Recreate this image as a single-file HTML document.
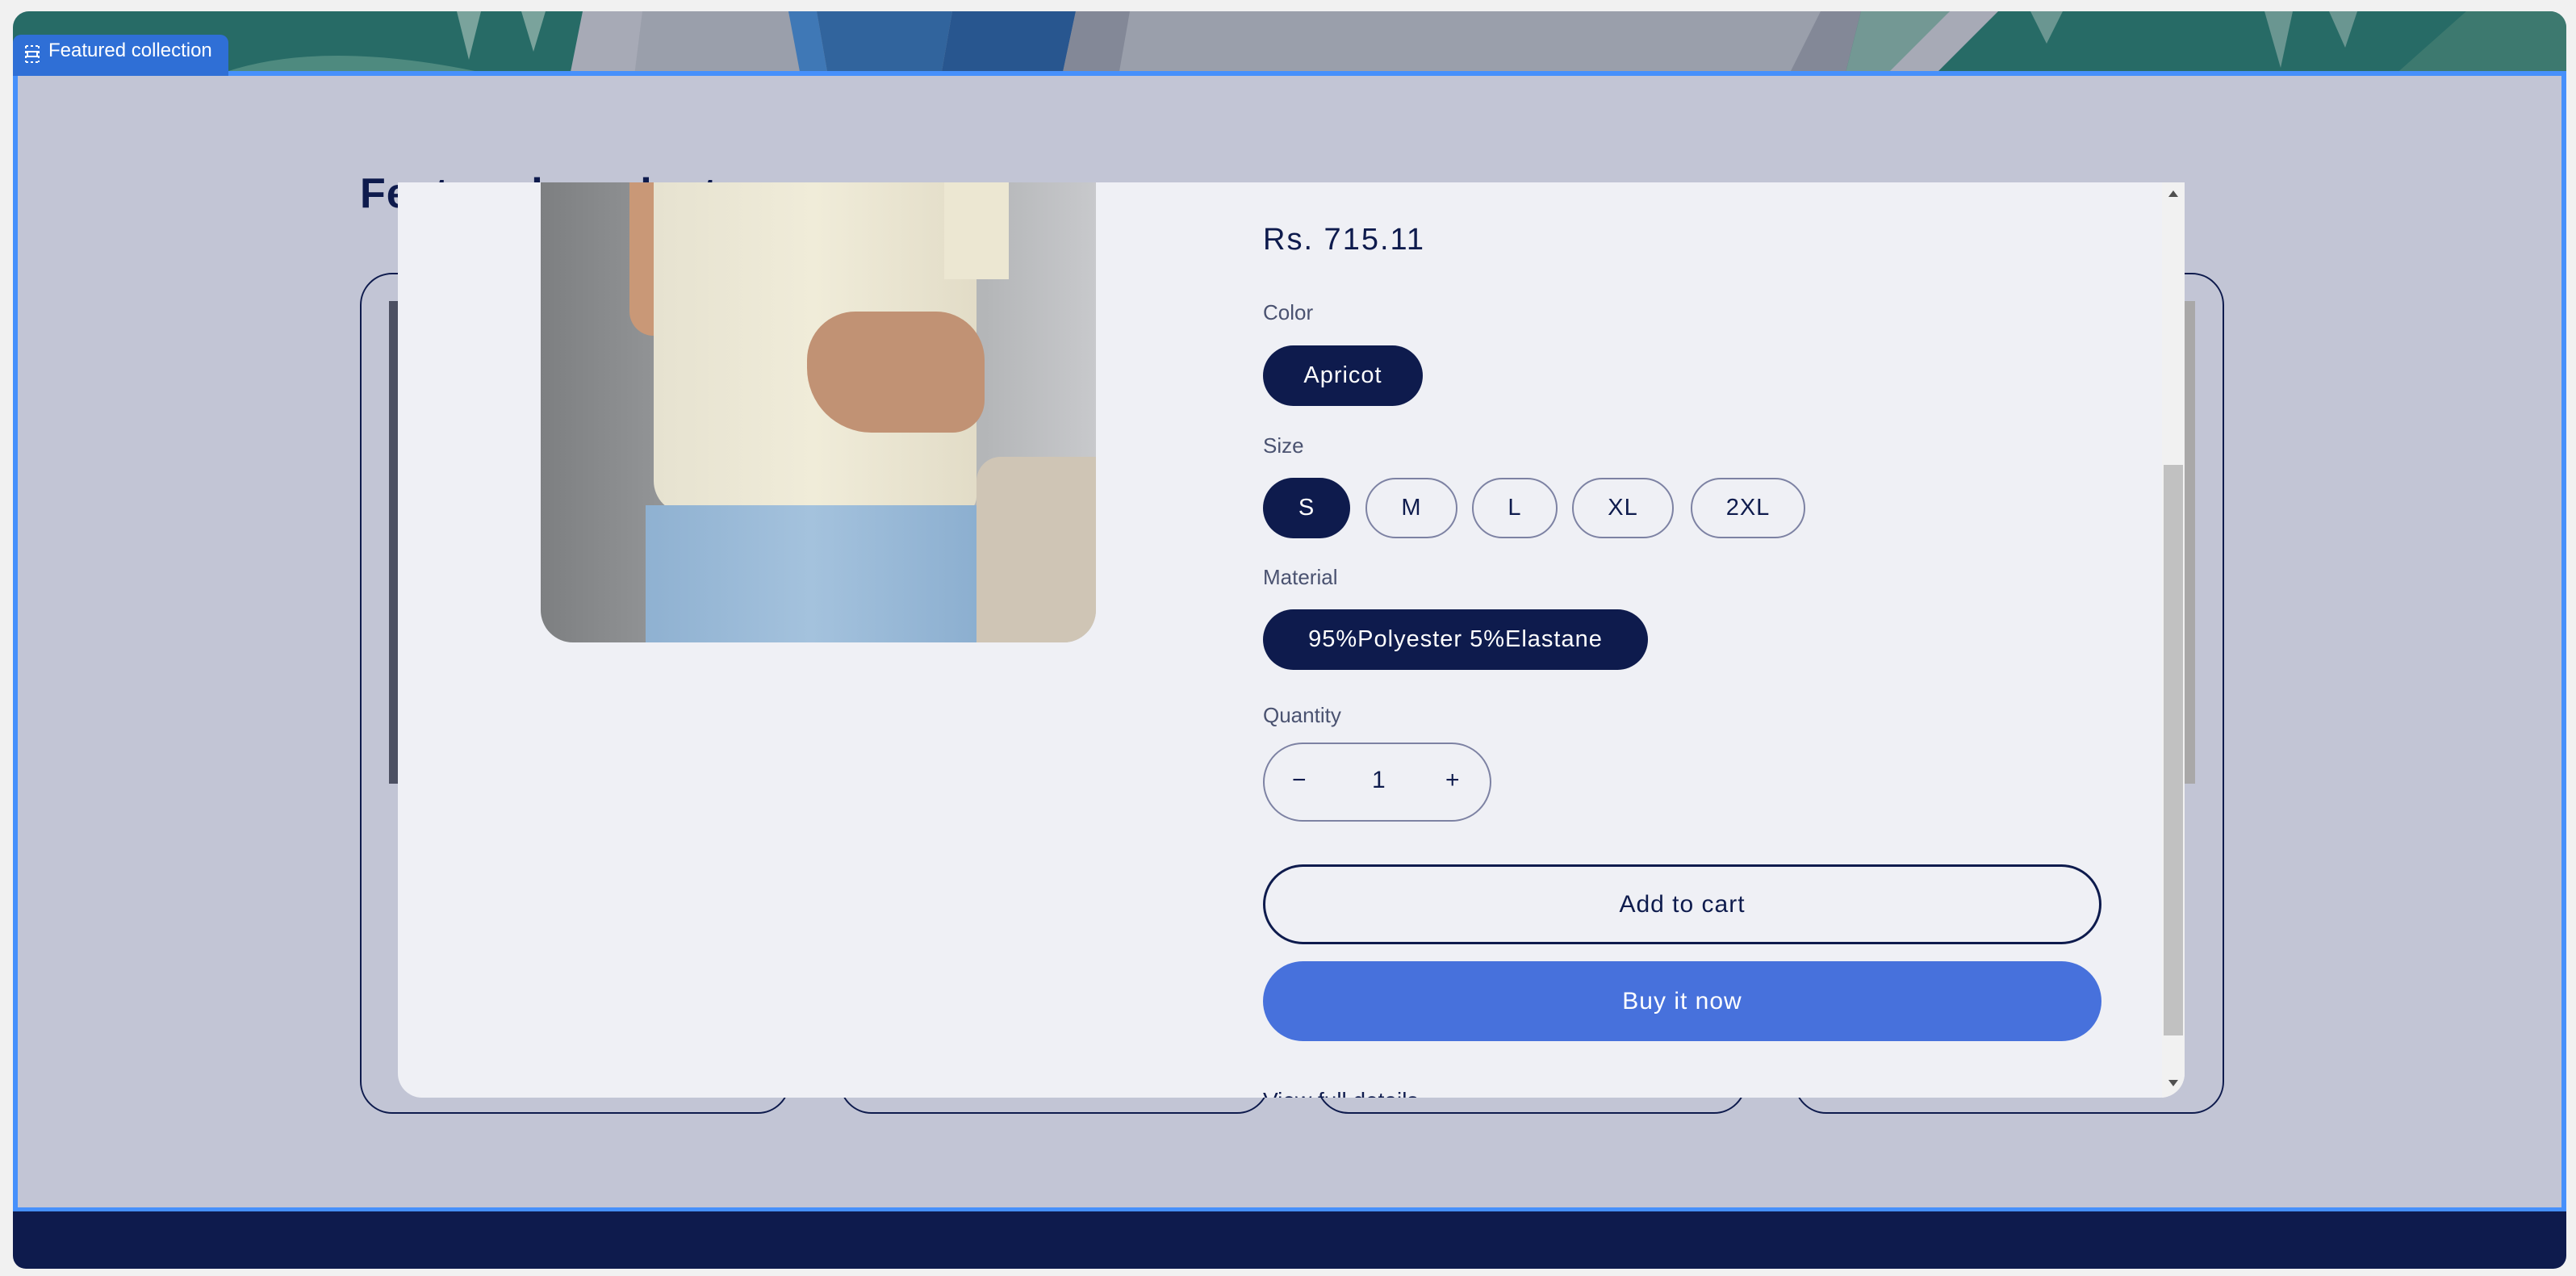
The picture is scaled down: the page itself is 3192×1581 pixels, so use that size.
<!DOCTYPE html>
<html><head><meta charset="utf-8"><style>
*{margin:0;padding:0;box-sizing:border-box}
html,body{width:3192px;height:1581px;overflow:hidden;background:#f1f1f1;font-family:"Liberation Sans",sans-serif}
.abs{position:absolute}
.band{left:16px;top:14px;width:3164px;height:80px;border-radius:20px 20px 0 0;overflow:hidden}
.tag{left:16px;top:43px;width:267px;height:51px;background:#2f6fd6;border-radius:10px 10px 0 0;color:#fff;font-size:24px;line-height:40px;padding-left:44px}
.sec{left:16px;top:88px;width:3164px;height:1414px;background:#c2c5d5;border:6px solid #4690fb}
.foot{left:16px;top:1501px;width:3164px;height:71px;background:#0e1b4d;border-radius:0 0 16px 16px}
h2{position:absolute;left:446px;top:214px;font-size:52px;line-height:52px;color:#0e1b4d;font-weight:bold;letter-spacing:1px}
.card{top:338px;height:1042px;width:533px;border:2px solid #0e1b4d;border-radius:40px}
.modal{left:493px;top:226px;width:2214px;height:1134px;background:#eff0f5;border-radius:0 0 30px 30px;overflow:hidden}
.lbl{position:absolute;left:1072px;font-size:26px;color:#4a5270}
.pill{position:absolute;height:75px;border-radius:40px;font-size:29px;display:flex;align-items:center;justify-content:center;letter-spacing:1px}
.dark{background:#0e1b4d;color:#fff}
.out{border:2px solid #7d82a3;color:#0e1b4d}
</style></head><body>
<div class="abs band">
<svg width="3164" height="80" viewBox="0 0 3164 80" preserveAspectRatio="none">
<rect width="3164" height="80" fill="#9a9fab"/>
<rect width="706" height="80" fill="#276b66"/>
<path d="M250 80 Q380 30 600 80Z" fill="#4e8a7f"/>
<path d="M550 0 L565 60 L580 0Z M630 0 L645 50 L660 0Z" fill="#7aa39c"/>
<polygon points="706,0 780,0 770,80 690,80" fill="#a7aab6"/>
<polygon points="961,0 996,0 1010,80 976,80" fill="#3f78b6"/>
<polygon points="996,0 1164,0 1150,80 1010,80" fill="#31649d"/>
<polygon points="1164,0 1317,0 1300,80 1150,80" fill="#28568f"/>
<polygon points="1317,0 1384,0 1370,80 1300,80" fill="#838897"/>
<polygon points="2240,0 2290,0 2270,80 2200,80" fill="#838897"/>
<polygon points="2290,0 3164,0 3164,80 2270,80" fill="#276b66"/>
<polygon points="2290,0 2400,0 2330,80 2270,80" fill="#739894"/>
<polygon points="2400,0 2460,0 2380,80 2320,80" fill="#a7aab6"/>
<polygon points="3040,0 3164,0 3164,80 2950,80" fill="#3d796f"/>
<path d="M2790 0 L2810 70 L2825 0Z M2870 0 L2890 45 L2905 0Z M2500 0 L2520 40 L2540 0Z" fill="#6a9691"/>
</svg></div>
<div class="abs sec"></div>
<div class="abs tag"><svg class="abs" style="left:14px;top:12px" width="20" height="24" viewBox="0 0 20 24"><path d="M2 2h16M2 22h16M2 2v20M18 2v20" stroke="#fff" stroke-width="2" stroke-dasharray="3 3" fill="none"/><rect x="4" y="9" width="12" height="6" fill="none" stroke="#fff" stroke-width="2"/></svg>Featured collection</div>
<h2>Featured products</h2>
<div class="abs card" style="left:446px"></div>
<div class="abs card" style="left:1040px"></div>
<div class="abs card" style="left:1631px"></div>
<div class="abs card" style="left:2223px"></div>
<div class="abs" style="left:482px;top:373px;width:20px;height:598px;background:#4c5062"></div>
<div class="abs" style="left:2707px;top:373px;width:13px;height:598px;background:#a9a8a8"></div>
<div class="abs foot"></div>
<div class="abs modal">
 <div class="abs" style="left:177px;top:0;width:688px;height:570px;border-radius:0 0 40px 40px;overflow:hidden;background:linear-gradient(90deg,#7d7f81,#a5a7a9 40%,#b4b6b8 80%,#c8c9cc)">
  <div class="abs" style="left:110px;top:0;width:70px;height:190px;background:#c99877;border-radius:0 0 40px 30px"></div>
  <div class="abs" style="left:140px;top:0;width:400px;height:410px;background:linear-gradient(90deg,#e6e2d0,#f0ecd9 50%,#e2dcc7);border-radius:0 0 20px 40px"></div>
  <div class="abs" style="left:500px;top:0;width:80px;height:120px;background:#ece7d2"></div>
  <div class="abs" style="left:330px;top:160px;width:220px;height:150px;background:#c19274;border-radius:60px 60px 40px 80px"></div>
  <div class="abs" style="left:130px;top:400px;width:410px;height:170px;background:linear-gradient(90deg,#8fb1d1,#a4c2dd 50%,#8cafd0)"></div>
  <div class="abs" style="left:540px;top:340px;width:150px;height:230px;background:#cfc5b5;border-radius:30px 0 0 0"></div>
 </div>
 <div class="abs" style="left:1072px;top:50px;font-size:38px;color:#0e1b4d;letter-spacing:2px">Rs. 715.11</div>
 <div class="lbl" style="top:146px">Color</div>
 <div class="pill dark" style="left:1072px;top:202px;width:198px">Apricot</div>
 <div class="lbl" style="top:311px">Size</div>
 <div class="pill dark" style="left:1072px;top:366px;width:108px">S</div>
 <div class="pill out" style="left:1199px;top:366px;width:114px">M</div>
 <div class="pill out" style="left:1331px;top:366px;width:106px">L</div>
 <div class="pill out" style="left:1455px;top:366px;width:126px">XL</div>
 <div class="pill out" style="left:1602px;top:366px;width:142px">2XL</div>
 <div class="lbl" style="top:474px">Material</div>
 <div class="pill dark" style="left:1072px;top:529px;width:477px">95%Polyester 5%Elastane</div>
 <div class="lbl" style="top:645px">Quantity</div>
 <div class="abs" style="left:1072px;top:694px;width:283px;height:98px;border:2px solid #7d82a3;border-radius:50px;color:#0e1b4d;font-size:30px">
  <span class="abs" style="left:34px;top:28px">−</span><span class="abs" style="left:133px;top:28px">1</span><span class="abs" style="left:224px;top:28px">+</span></div>
 <div class="pill" style="left:1072px;top:845px;width:1039px;height:99px;border:3px solid #0e1b4d;border-radius:50px;color:#0e1b4d;font-size:30px">Add to cart</div>
 <div class="pill" style="left:1072px;top:965px;width:1039px;height:99px;border-radius:50px;background:#4771dc;color:#fff;font-size:30px">Buy it now</div>
 <div class="abs" style="left:1072px;top:1122px;font-size:28px;color:#0e1b4d">View full details →</div>
 <div class="abs" style="left:2186px;top:0;width:28px;height:1134px;background:#f1f1f1"></div>
 <div class="abs" style="left:2188px;top:350px;width:24px;height:707px;background:#c1c1c1"></div>
 <div class="abs" style="left:2194px;top:10px;width:0;height:0;border-left:6px solid transparent;border-right:6px solid transparent;border-bottom:8px solid #505050"></div>
 <div class="abs" style="left:2194px;top:1112px;width:0;height:0;border-left:6px solid transparent;border-right:6px solid transparent;border-top:8px solid #505050"></div>
</div>
</body></html>
